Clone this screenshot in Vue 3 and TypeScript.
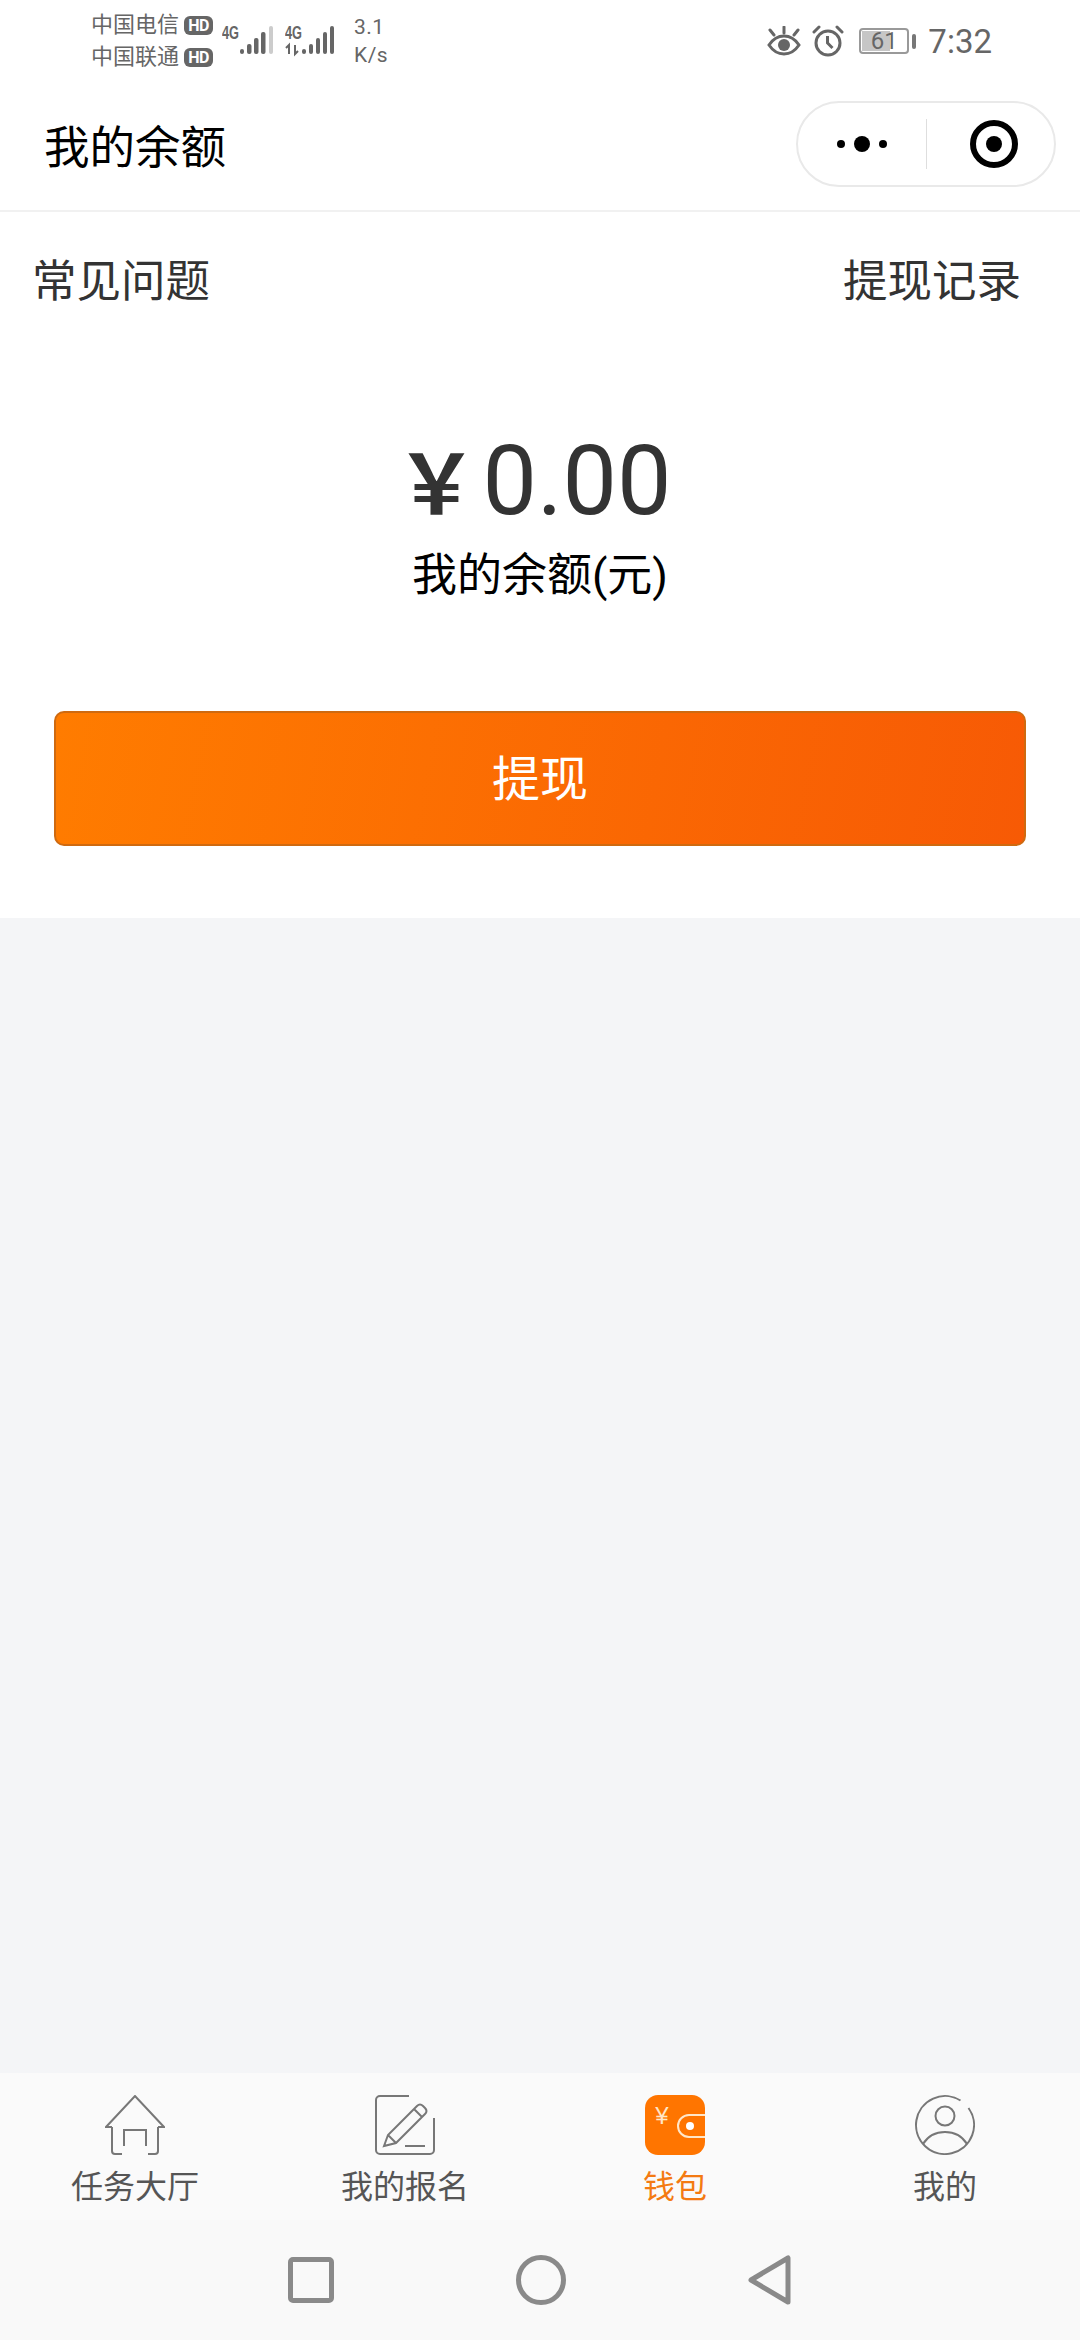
<template>
  <div class="page">
    <div class="status">
      <div class="carriers">
        <div v-for="name in carriers" :key="name" class="carrier">
          <span>{{ name }}</span>
          <b class="hd">HD</b>
        </div>
      </div>
      <svg class="signal" width="54" height="34" viewBox="0 0 54 34">
        <text x="0" y="15" class="g4" textLength="17" lengthAdjust="spacingAndGlyphs">4G</text>
        <g fill="#666">
          <rect x="18" y="25" width="4" height="5" rx="2" />
          <rect x="25" y="20" width="4.500" height="10" rx="2" />
          <rect x="32" y="14" width="4.500" height="16" rx="2" />
          <rect x="39" y="8" width="4.500" height="22" rx="2" />
        </g>
        <rect x="47" y="2" width="4" height="28" rx="2" fill="#ccc" />
      </svg>
      <svg class="signal second" width="54" height="34" viewBox="0 0 54 34">
        <text x="0" y="15" class="g4" textLength="17" lengthAdjust="spacingAndGlyphs">4G</text>
        <g fill="#666">
          <path d="M4 30v-9l-3 3M10 21v9l3-3" stroke="#666" stroke-width="2" fill="none" />
          <rect x="17" y="25" width="4" height="5" rx="2" />
          <rect x="24" y="20" width="4" height="10" rx="2" />
          <rect x="31" y="14" width="4" height="16" rx="2" />
          <rect x="38" y="8" width="4" height="22" rx="2" />
          <rect x="45" y="2" width="4" height="28" rx="2" />
        </g>
      </svg>
      <div class="speed">3.1<br />K/s</div>
      <div class="status-right">
        <svg width="34" height="30" viewBox="0 0 34 30">
          <path d="M2 19c4-6 9-9 15-9s11 3 15 9c-4 6-9 9-15 9S6 25 2 19z" fill="none" stroke="#666" stroke-width="3" />
          <circle cx="17" cy="19" r="6" fill="#666" />
          <path d="M17 7V1M7 9 3 4M27 9l4-5" stroke="#666" stroke-width="3" stroke-linecap="round" />
        </svg>
        <svg class="alarm" width="32" height="32" viewBox="0 0 32 32">
          <circle cx="16" cy="18" r="12" fill="none" stroke="#666" stroke-width="3" />
          <path d="M15.500 11v7l5 5" fill="none" stroke="#666" stroke-width="3" />
          <path d="M2 7l5-5M30 7l-5-5" stroke="#666" stroke-width="3" stroke-linecap="round" />
        </svg>
        <div class="battery">
          <div class="battery-body">
            <div class="battery-fill" :style="{ width: battery + '%' }"></div>
            <span>{{ battery }}</span>
          </div>
          <i class="battery-nub"></i>
        </div>
        <span class="time">7:32</span>
      </div>
    </div>

    <div class="navbar">
      <span class="nav-title">我的余额</span>
      <div class="capsule">
        <div class="capsule-cell">
          <svg width="50" height="16" viewBox="0 0 50 16">
            <circle cx="4" cy="8" r="4" />
            <circle cx="25" cy="8" r="8" />
            <circle cx="46" cy="8" r="4" />
          </svg>
        </div>
        <i class="capsule-line"></i>
        <div class="capsule-cell">
          <svg width="48" height="48" viewBox="0 0 48 48">
            <circle cx="24" cy="24" r="21" fill="none" stroke="#000" stroke-width="6" />
            <circle cx="24" cy="24" r="8" />
          </svg>
        </div>
      </div>
    </div>

    <section class="balance">
      <div class="links">
        <span>常见问题</span>
        <span>提现记录</span>
      </div>
      <div class="amount"><span class="yen">￥</span><span>0.00</span></div>
      <div class="amount-label">我的余额(元)</div>
      <button class="withdraw">提现</button>
    </section>

    <div class="spacer"></div>

    <nav class="tabs">
      <div v-for="tab in tabs" :key="tab.key" class="tab" :class="{ active: tab.key === 'wallet' }">
        <svg v-if="tab.key === 'home'" width="60" height="60" viewBox="0 0 60 60" class="tab-icon">
          <path d="M7 32H1L30 1l29 31h-6M7 32v24a3 3 0 0 0 3 3h7M53 32v24a3 3 0 0 1-3 3h-7M19 51V35h22v16" />
        </svg>
        <svg v-else-if="tab.key === 'signup'" width="60" height="60" viewBox="0 0 60 60" class="tab-icon">
          <path d="M34 1H5a4 4 0 0 0-4 4v50a4 4 0 0 0 4 4h50a4 4 0 0 0 4-4V23" />
          <path d="M9 51l4-11L42 11c2-2 4-2 6 0l2 2c2 2 2 4 0 6L21 48zM13 40l8 8M39 14l8 8M30 51h20" />
        </svg>
        <svg v-else-if="tab.key === 'wallet'" width="60" height="60" viewBox="0 0 60 60">
          <rect width="60" height="60" rx="13" fill="#ff7500" />
          <text x="17" y="29" class="wallet-yen" text-anchor="middle">¥</text>
          <path d="M60 20H44a11 11 0 0 0 0 22h16" fill="none" stroke="#ffe6c8" stroke-width="2" />
          <circle cx="45" cy="31" r="4" fill="#fff" />
        </svg>
        <svg v-else width="60" height="60" viewBox="0 0 60 60" class="tab-icon">
          <path d="M45.500 5.500A29 29 0 1 0 53.500 13" />
          <circle cx="30" cy="21" r="9.500" />
          <path d="M8 49c5-8 13-12 22-12s17 4 22 12" />
        </svg>
        <span class="tab-label">{{ tab.label }}</span>
      </div>
    </nav>

    <div class="sysbar">
      <svg width="46" height="46" viewBox="0 0 46 46">
        <rect x="2.500" y="2.500" width="41" height="41" rx="2.500" />
      </svg>
      <svg width="50" height="50" viewBox="0 0 50 50">
        <circle cx="25" cy="25" r="22.500" />
      </svg>
      <svg width="44" height="50" viewBox="0 0 44 50">
        <path d="M40 3v44L3 25z" />
      </svg>
    </div>
  </div>
</template>

<script setup lang="ts">
const carriers = ['中国电信', '中国联通']
const battery = 61
const tabs = [
  { key: 'home', label: '任务大厅' },
  { key: 'signup', label: '我的报名' },
  { key: 'wallet', label: '钱包' },
  { key: 'mine', label: '我的' }
]
</script>

<style>
html,
body {
  margin: 0;
  background: #f4f5f7;
}
</style>

<style scoped>
.page {
  display: flex;
  flex-direction: column;
  width: 1080px;
  height: 2340px;
  overflow: hidden;
  background: #f4f5f7;
  font-family: Roboto, "Noto Sans CJK SC", sans-serif;
}
.status {
  display: flex;
  align-items: center;
  flex: none;
  height: 80px;
  padding: 2px 88px 0 91px;
  box-sizing: border-box;
  background: #fff;
  color: #666;
}
.carriers {
  display: flex;
  flex-direction: column;
  gap: 4px;
  font-size: 22px;
  line-height: 28px;
}
.carrier {
  display: flex;
  align-items: center;
  gap: 5px;
}
.hd {
  width: 29px;
  height: 19px;
  border-radius: 6px;
  background: #666;
  color: #fff;
  font-size: 16px;
  line-height: 19px;
  text-align: center;
  letter-spacing: -0.5px;
}
.signal {
  margin-left: 9px;
}
.signal.second {
  margin-left: 9px;
}
.g4 {
  font-family: "Liberation Sans", sans-serif;
  font-size: 18px;
  font-weight: 700;
  fill: #666;
}
.speed {
  margin-left: 15px;
  font-size: 21px;
  line-height: 28px;
  letter-spacing: 0.5px;
}
.status-right {
  display: flex;
  align-items: center;
  margin-left: auto;
}
.alarm {
  margin-left: 11px;
}
.battery {
  display: flex;
  align-items: center;
  gap: 3px;
  margin-left: 15px;
}
.battery-body {
  position: relative;
  width: 50px;
  height: 26px;
  border: 2px solid #999;
  border-radius: 4px;
  box-sizing: border-box;
  font-size: 24px;
  line-height: 22px;
  text-align: center;
}
.battery-body span {
  position: relative;
}
.battery-fill {
  position: absolute;
  top: 1px;
  bottom: 1px;
  left: 1px;
  background: #c6c6c6;
}
.battery-nub {
  width: 4px;
  height: 15px;
  border-radius: 2px;
  background: #777;
}
.time {
  margin-left: 12px;
  font-size: 33px;
}
.navbar {
  display: flex;
  align-items: center;
  justify-content: space-between;
  flex: none;
  height: 132px;
  padding: 0 24px 2px 44px;
  box-sizing: border-box;
  border-bottom: 2px solid #f1f1f1;
  background: #fff;
}
.nav-title {
  color: #000;
  font-size: 45.500px;
}
.capsule {
  display: flex;
  align-items: center;
  width: 260px;
  height: 86px;
  border: 2px solid #e9e9e9;
  border-radius: 43px;
  box-sizing: border-box;
}
.capsule-cell {
  display: flex;
  flex: 1 1 0;
  align-items: center;
  justify-content: center;
}
.capsule-cell:last-child svg {
  margin-left: 8px;
}
.capsule-line {
  width: 1px;
  height: 50px;
  background: #dedede;
}
.balance {
  display: flex;
  flex-direction: column;
  align-items: center;
  flex: none;
  height: 706px;
  background: #fff;
}
.links {
  display: flex;
  justify-content: space-between;
  align-self: stretch;
  padding: 35px 59px 0 32px;
  color: #333;
  font-size: 44.500px;
  line-height: 70px;
}
.amount {
  display: flex;
  align-items: baseline;
  gap: 5px;
  margin-top: 102px;
  margin-right: 13px;
  color: #333;
  font-size: 97px;
  line-height: 120px;
}
.yen {
  font-family: "Noto Sans CJK SC", sans-serif;
  font-size: 82px;
  font-weight: 700;
  line-height: 120px;
}
.amount-label {
  margin-top: 4px;
  color: #000;
  font-size: 45px;
  line-height: 62px;
}
.withdraw {
  width: 972px;
  height: 135px;
  margin-top: 104px;
  padding-bottom: 8px;
  border: 2px solid #cf6a10;
  border-radius: 10px;
  background: linear-gradient(100deg, #ff7c00, #f75a05);
  color: #fff;
  font-family: inherit;
  font-size: 48px;
}
.spacer {
  flex: 1;
}
.tabs {
  display: grid;
  grid-template-columns: repeat(4, 1fr);
  flex: none;
  height: 147px;
  padding-top: 22px;
  box-sizing: border-box;
  background: #fafafa;
}
.tab {
  display: flex;
  flex-direction: column;
  align-items: center;
  color: #555;
}
.tab.active {
  color: #f47a12;
}
.tab-icon {
  fill: none;
  stroke: #777;
  stroke-width: 2;
}
.wallet-yen {
  fill: #ffe6c8;
  font-family: "Liberation Sans", sans-serif;
  font-size: 24px;
}
.tab-label {
  font-size: 32px;
  line-height: 46px;
  margin-top: 9px;
}
.sysbar {
  display: flex;
  align-items: center;
  justify-content: center;
  gap: 182px;
  flex: none;
  height: 120px;
  background: #f9f9f9;
}
.sysbar svg {
  fill: none;
  stroke: #8a8a8a;
  stroke-width: 5;
  stroke-linejoin: round;
}
</style>
